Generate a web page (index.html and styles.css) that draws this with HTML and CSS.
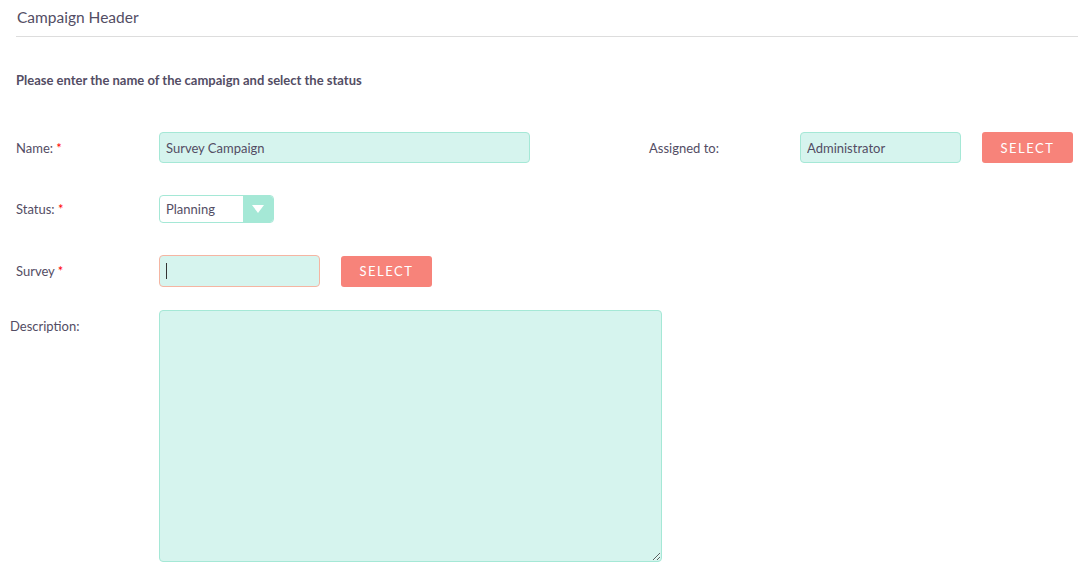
FILE: index.html
```html
<!DOCTYPE html>
<html lang="en">
<head>
    <meta charset="UTF-8">
    <title>Campaign Header</title>
    <link rel="stylesheet" href="styles.css">
</head>
<body>
    <div class="panel">
        <div class="panel-header">Campaign Header</div>
        <p class="intro">Please enter the name of the campaign and select the status</p>

        <div class="form-row row-name">
            <label class="field-label">Name: <span class="req">*</span></label>
            <input type="text" class="field-input input-name" value="Survey Campaign">
            <label class="field-label label-assigned">Assigned to:</label>
            <input type="text" class="field-input input-assigned" value="Administrator">
            <button class="select-btn btn-assigned">SELECT</button>
        </div>

        <div class="form-row row-status">
            <label class="field-label">Status: <span class="req">*</span></label>
            <div class="select-box">
                <span class="select-value">Planning</span>
                <span class="select-arrow">
                    <svg width="12" height="8" viewBox="0 0 12 8"><path d="M0 0 H12 L6 8 Z" fill="#ffffff"/></svg>
                </span>
            </div>
        </div>

        <div class="form-row row-survey">
            <label class="field-label">Survey <span class="req">*</span></label>
            <div class="field-input input-survey"><span class="caret"></span></div>
            <button class="select-btn btn-survey">SELECT</button>
        </div>

        <div class="form-row row-desc">
            <label class="field-label label-desc">Description:</label>
            <textarea class="field-input desc-area"></textarea>
        </div>
    </div>
</body>
</html>
```

FILE: styles.css
```css
* {
    margin: 0;
    padding: 0;
    box-sizing: border-box;
}

body {
    font-family: Lato, 'Open Sans', sans-serif;
    color: #534d64;
    background: #fff;
}

.panel {
    padding: 0 0 0 16px;
}

.panel-header {
    height: 37px;
    padding: 8px 0 0 1px;
    font-size: 15.5px;
    border-bottom: 1px solid #dddddd;
}

.intro {
    margin-top: 35px;
    font-size: 13px;
    font-weight: bold;
    line-height: 16px;
}

.form-row {
    display: flex;
    align-items: center;
}

.field-label {
    width: 143px;
    font-size: 13px;
    flex-shrink: 0;
}

.req {
    color: #ff0000;
}

.field-input {
    height: 31px;
    background: #d6f4ee;
    border: 1px solid #a5e8d6;
    border-radius: 4px;
    font-family: Lato, sans-serif;
    font-size: 13px;
    color: #534d64;
    padding: 0 6px;
    outline: none;
}

.row-name {
    margin-top: 44px;
}

.input-name {
    width: 371px;
}

.label-assigned {
    margin-left: 119px;
    width: 151px;
}

.input-assigned {
    width: 161px;
}

.select-btn {
    height: 31px;
    width: 91px;
    background: #f7837a;
    color: #fff;
    border: none;
    border-radius: 3px;
    font-family: Lato, sans-serif;
    font-size: 13px;
    letter-spacing: 1.5px;
}

.btn-assigned {
    margin-left: 21px;
}

.row-status {
    margin-top: 32px;
}

.select-box {
    display: flex;
    width: 115px;
    height: 28px;
    border: 1px solid #a5e8d6;
    border-radius: 4px;
    overflow: hidden;
}

.select-value {
    flex: 1;
    font-size: 13px;
    line-height: 26px;
    padding-left: 6px;
}

.select-arrow {
    width: 30px;
    background: #a5e8d6;
    display: flex;
    align-items: center;
    justify-content: center;
}

.row-survey {
    margin-top: 32px;
}

.input-survey {
    width: 161px;
    height: 32px;
    border-color: #f5b5a2;
    display: flex;
    align-items: center;
}

.caret {
    width: 1px;
    height: 16px;
    background: #333;
}

.btn-survey {
    margin-left: 21px;
}

.row-desc {
    margin-top: 23px;
    margin-left: -6px;
    align-items: flex-start;
}

.label-desc {
    width: 149px;
    padding-top: 8px;
}

.desc-area {
    width: 503px;
    height: 252px;
    resize: both;
}
```
